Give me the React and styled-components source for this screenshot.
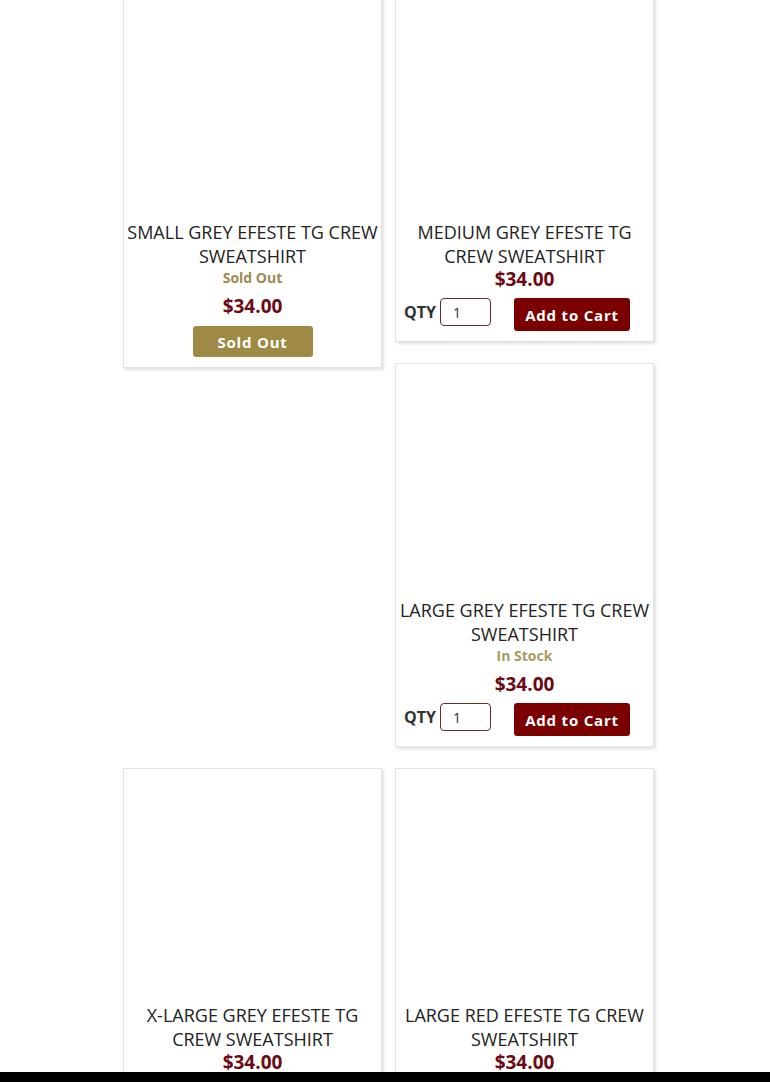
import React from "react";
import styled, { createGlobalStyle } from "styled-components";

const GlobalStyle = createGlobalStyle`
  html, body {
    margin: 0;
    padding: 0;
    background: #ffffff;
    font-family: "Open Sans", "Liberation Sans", sans-serif;
  }
`;

const Grid = styled.div`
  display: flex;
  flex-direction: column;
  gap: 21px;
  width: 531px;
  margin: -15px 0 0 123px;
`;

const Row = styled.div`
  display: flex;
  align-items: flex-start;
  gap: 13px;
`;

const Stack = styled.div`
  display: flex;
  flex-direction: column;
  gap: 21px;
`;

const Card = styled.div`
  box-sizing: border-box;
  width: 259px;
  background: #fff;
  border: 1px solid #e2e2e2;
  box-shadow: 2px 2px 3px rgba(0, 0, 0, 0.12);
  padding-bottom: 10px;
  display: flex;
  flex-direction: column;
  align-items: center;
`;

const ImageArea = styled.div`
  width: 100%;
  height: 234px;
`;

const Title = styled.div`
  font-size: 18px;
  line-height: 24px;
  color: #222;
  text-transform: uppercase;
  text-align: center;
  padding: 0;
`;

const Stock = styled.div`
  font-size: 14px;
  font-weight: 700;
  line-height: 20px;
  margin-bottom: 7px;
  color: ${(p) => (p.$sold ? "#9e8a50" : "#a89b62")};
`;

const Price = styled.div`
  font-size: 19px;
  font-weight: 700;
  line-height: 22px;
  color: #6a0a14;
`;

const SoldButton = styled.button`
  margin-top: 9px;
  width: 120px;
  height: 31px;
  border: none;
  border-radius: 3px;
  background: #9e8a45;
  color: #fff;
  font-family: inherit;
  font-size: 15px;
  font-weight: 700;
  letter-spacing: 0.8px;
`;

const QtyRow = styled.div`
  align-self: stretch;
  display: flex;
  align-items: flex-start;
  margin-top: 8px;
  padding: 0 23px 0 8px;
`;

const QtyLabel = styled.span`
  font-size: 16px;
  font-weight: 700;
  line-height: 28px;
  color: #333;
`;

const QtyInput = styled.input`
  box-sizing: border-box;
  width: 51px;
  height: 28px;
  margin-left: 4px;
  padding: 0 0 0 12px;
  border: 1px solid #6a2a2a;
  border-radius: 4px;
  font-family: inherit;
  font-size: 14px;
  color: #333;
  outline: none;
`;

const CartButton = styled.button`
  margin-left: auto;
  width: 116px;
  height: 33px;
  border: none;
  border-radius: 3px;
  background: #7b0000;
  color: #fff;
  font-family: inherit;
  font-size: 15px;
  font-weight: 700;
  letter-spacing: 0.8px;
`;

const BottomBar = styled.div`
  position: fixed;
  left: 0;
  right: 0;
  bottom: 0;
  height: 10px;
  background: #000;
`;

function Product({ name, stock, sold }) {
  return (
    <Card>
      <ImageArea />
      <Title>{name}</Title>
      {stock && <Stock $sold={sold}>{stock}</Stock>}
      <Price>$34.00</Price>
      {sold ? (
        <SoldButton>Sold Out</SoldButton>
      ) : (
        <QtyRow>
          <QtyLabel>QTY</QtyLabel>
          <QtyInput defaultValue="1" />
          <CartButton>Add to Cart</CartButton>
        </QtyRow>
      )}
    </Card>
  );
}

export default function App() {
  return (
    <>
      <GlobalStyle />
      <Grid>
        <Row>
          <Product name="Small Grey Efeste TG Crew Sweatshirt" stock="Sold Out" sold />
          <Stack>
            <Product name="Medium Grey Efeste TG Crew Sweatshirt" />
            <Product name="Large Grey Efeste TG Crew Sweatshirt" stock="In Stock" />
          </Stack>
        </Row>
        <Row>
          <Product name="X-Large Grey Efeste TG Crew Sweatshirt" />
          <Product name="Large Red Efeste TG Crew Sweatshirt" />
        </Row>
      </Grid>
      <BottomBar />
    </>
  );
}
